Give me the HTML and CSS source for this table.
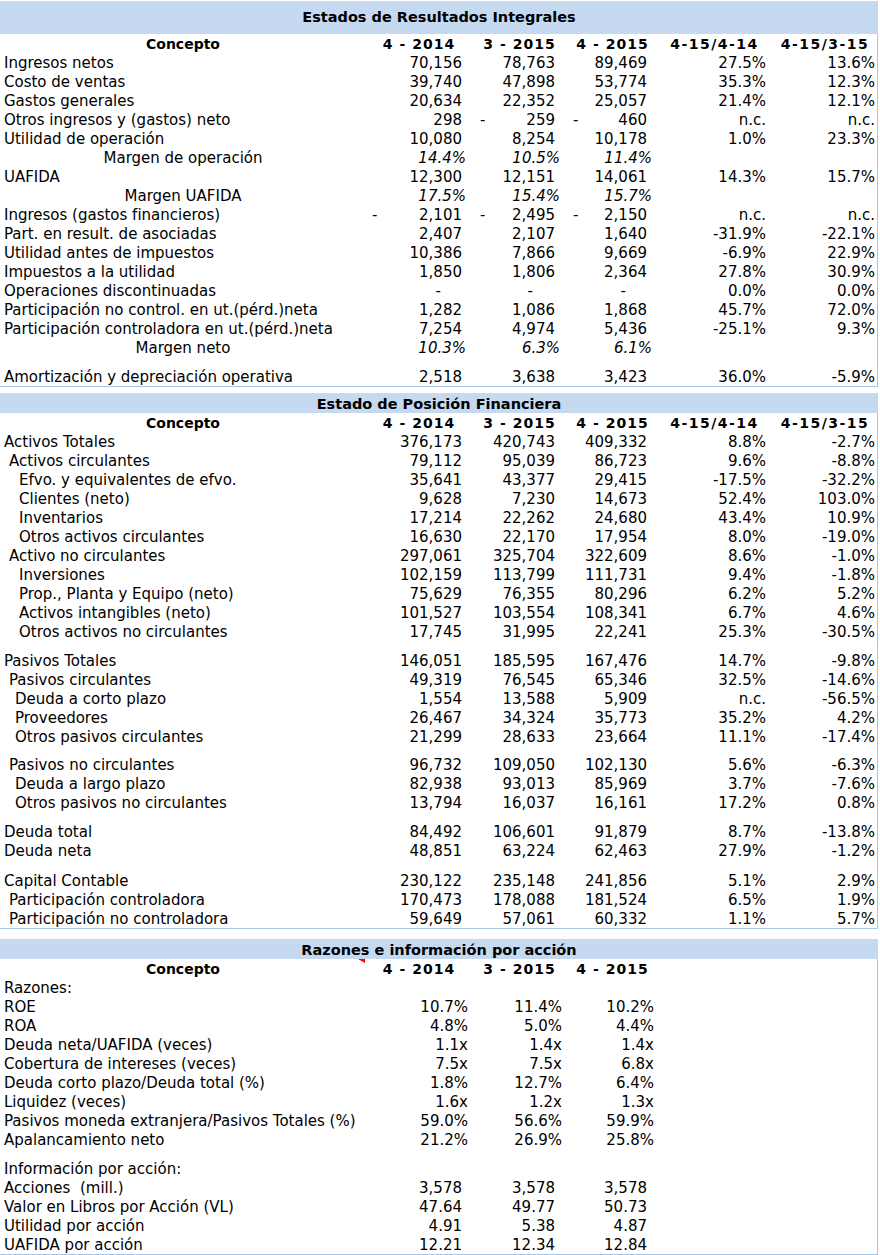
FILE: index.html
```html
<!DOCTYPE html>
<html lang="es">
<head>
<meta charset="utf-8">
<title>Estados financieros</title>
<link rel="stylesheet" href="styles.css">
</head>
<body>
<div class="sheet">

<section class="block b1">
  <div class="title">Estados de Resultados Integrales</div>
  <div class="row head"><div class="c">Concepto</div><div class="yr">4 - 2014</div><div class="yr">3 - 2015</div><div class="yr">4 - 2015</div><div class="rt">4-15/4-14</div><div class="rt">4-15/3-15</div></div>
  <div class="row"><div class="c">Ingresos netos</div><div class="n">70,156</div><div class="n">78,763</div><div class="n">89,469</div><div class="p">27.5%</div><div class="p">13.6%</div></div>
  <div class="row"><div class="c">Costo de ventas</div><div class="n">39,740</div><div class="n">47,898</div><div class="n">53,774</div><div class="p">35.3%</div><div class="p">12.3%</div></div>
  <div class="row"><div class="c">Gastos generales</div><div class="n">20,634</div><div class="n">22,352</div><div class="n">25,057</div><div class="p">21.4%</div><div class="p">12.1%</div></div>
  <div class="row"><div class="c">Otros ingresos y (gastos) neto</div><div class="n">298</div><div class="neg"><span>-</span><span>259</span></div><div class="neg"><span>-</span><span>460</span></div><div class="p">n.c.</div><div class="p">n.c.</div></div>
  <div class="row"><div class="c">Utilidad de operación</div><div class="n">10,080</div><div class="n">8,254</div><div class="n">10,178</div><div class="p">1.0%</div><div class="p">23.3%</div></div>
  <div class="row"><div class="c ctr">Margen de operación</div><div class="m">14.4%</div><div class="m">10.5%</div><div class="m">11.4%</div><div></div><div></div></div>
  <div class="row"><div class="c">UAFIDA</div><div class="n">12,300</div><div class="n">12,151</div><div class="n">14,061</div><div class="p">14.3%</div><div class="p">15.7%</div></div>
  <div class="row"><div class="c ctr">Margen UAFIDA</div><div class="m">17.5%</div><div class="m">15.4%</div><div class="m">15.7%</div><div></div><div></div></div>
  <div class="row"><div class="c">Ingresos (gastos financieros)</div><div class="neg"><span>-</span><span>2,101</span></div><div class="neg"><span>-</span><span>2,495</span></div><div class="neg"><span>-</span><span>2,150</span></div><div class="p">n.c.</div><div class="p">n.c.</div></div>
  <div class="row"><div class="c">Part. en result. de asociadas</div><div class="n">2,407</div><div class="n">2,107</div><div class="n">1,640</div><div class="p">-31.9%</div><div class="p">-22.1%</div></div>
  <div class="row"><div class="c">Utilidad antes de impuestos</div><div class="n">10,386</div><div class="n">7,866</div><div class="n">9,669</div><div class="p">-6.9%</div><div class="p">22.9%</div></div>
  <div class="row"><div class="c">Impuestos a la utilidad</div><div class="n">1,850</div><div class="n">1,806</div><div class="n">2,364</div><div class="p">27.8%</div><div class="p">30.9%</div></div>
  <div class="row"><div class="c">Operaciones discontinuadas</div><div class="z">-</div><div class="z">-</div><div class="z">-</div><div class="p">0.0%</div><div class="p">0.0%</div></div>
  <div class="row"><div class="c">Participación no control. en ut.(pérd.)neta</div><div class="n">1,282</div><div class="n">1,086</div><div class="n">1,868</div><div class="p">45.7%</div><div class="p">72.0%</div></div>
  <div class="row"><div class="c">Participación controladora en ut.(pérd.)neta</div><div class="n">7,254</div><div class="n">4,974</div><div class="n">5,436</div><div class="p">-25.1%</div><div class="p">9.3%</div></div>
  <div class="row"><div class="c ctr">Margen neto</div><div class="m">10.3%</div><div class="m">6.3%</div><div class="m">6.1%</div><div></div><div></div></div>
  <div class="gap g10"></div>
  <div class="row"><div class="c">Amortización y depreciación operativa</div><div class="n">2,518</div><div class="n">3,638</div><div class="n">3,423</div><div class="p">36.0%</div><div class="p">-5.9%</div></div>
</section>

<section class="block b2">
  <div class="title">Estado de Posición Financiera</div>
  <div class="row head"><div class="c">Concepto</div><div class="yr">4 - 2014</div><div class="yr">3 - 2015</div><div class="yr">4 - 2015</div><div class="rt">4-15/4-14</div><div class="rt">4-15/3-15</div></div>
  <div class="row"><div class="c">Activos Totales</div><div class="n">376,173</div><div class="n">420,743</div><div class="n">409,332</div><div class="p">8.8%</div><div class="p">-2.7%</div></div>
  <div class="row"><div class="c i1">Activos circulantes</div><div class="n">79,112</div><div class="n">95,039</div><div class="n">86,723</div><div class="p">9.6%</div><div class="p">-8.8%</div></div>
  <div class="row"><div class="c i3">Efvo. y equivalentes de efvo.</div><div class="n">35,641</div><div class="n">43,377</div><div class="n">29,415</div><div class="p">-17.5%</div><div class="p">-32.2%</div></div>
  <div class="row"><div class="c i3">Clientes (neto)</div><div class="n">9,628</div><div class="n">7,230</div><div class="n">14,673</div><div class="p">52.4%</div><div class="p">103.0%</div></div>
  <div class="row"><div class="c i3">Inventarios</div><div class="n">17,214</div><div class="n">22,262</div><div class="n">24,680</div><div class="p">43.4%</div><div class="p">10.9%</div></div>
  <div class="row"><div class="c i3">Otros activos circulantes</div><div class="n">16,630</div><div class="n">22,170</div><div class="n">17,954</div><div class="p">8.0%</div><div class="p">-19.0%</div></div>
  <div class="row"><div class="c i1">Activo no circulantes</div><div class="n">297,061</div><div class="n">325,704</div><div class="n">322,609</div><div class="p">8.6%</div><div class="p">-1.0%</div></div>
  <div class="row"><div class="c i3">Inversiones</div><div class="n">102,159</div><div class="n">113,799</div><div class="n">111,731</div><div class="p">9.4%</div><div class="p">-1.8%</div></div>
  <div class="row"><div class="c i3">Prop., Planta y Equipo (neto)</div><div class="n">75,629</div><div class="n">76,355</div><div class="n">80,296</div><div class="p">6.2%</div><div class="p">5.2%</div></div>
  <div class="row"><div class="c i3">Activos intangibles (neto)</div><div class="n">101,527</div><div class="n">103,554</div><div class="n">108,341</div><div class="p">6.7%</div><div class="p">4.6%</div></div>
  <div class="row"><div class="c i3">Otros activos no circulantes</div><div class="n">17,745</div><div class="n">31,995</div><div class="n">22,241</div><div class="p">25.3%</div><div class="p">-30.5%</div></div>
  <div class="gap g10"></div>
  <div class="row"><div class="c">Pasivos Totales</div><div class="n">146,051</div><div class="n">185,595</div><div class="n">167,476</div><div class="p">14.7%</div><div class="p">-9.8%</div></div>
  <div class="row"><div class="c i1">Pasivos circulantes</div><div class="n">49,319</div><div class="n">76,545</div><div class="n">65,346</div><div class="p">32.5%</div><div class="p">-14.6%</div></div>
  <div class="row"><div class="c i2">Deuda a corto plazo</div><div class="n">1,554</div><div class="n">13,588</div><div class="n">5,909</div><div class="p">n.c.</div><div class="p">-56.5%</div></div>
  <div class="row"><div class="c i2">Proveedores</div><div class="n">26,467</div><div class="n">34,324</div><div class="n">35,773</div><div class="p">35.2%</div><div class="p">4.2%</div></div>
  <div class="row"><div class="c i2">Otros pasivos circulantes</div><div class="n">21,299</div><div class="n">28,633</div><div class="n">23,664</div><div class="p">11.1%</div><div class="p">-17.4%</div></div>
  <div class="gap g9"></div>
  <div class="row"><div class="c i1">Pasivos no circulantes</div><div class="n">96,732</div><div class="n">109,050</div><div class="n">102,130</div><div class="p">5.6%</div><div class="p">-6.3%</div></div>
  <div class="row"><div class="c i2">Deuda a largo plazo</div><div class="n">82,938</div><div class="n">93,013</div><div class="n">85,969</div><div class="p">3.7%</div><div class="p">-7.6%</div></div>
  <div class="row"><div class="c i2">Otros pasivos no circulantes</div><div class="n">13,794</div><div class="n">16,037</div><div class="n">16,161</div><div class="p">17.2%</div><div class="p">0.8%</div></div>
  <div class="gap g10"></div>
  <div class="row"><div class="c">Deuda total</div><div class="n">84,492</div><div class="n">106,601</div><div class="n">91,879</div><div class="p">8.7%</div><div class="p">-13.8%</div></div>
  <div class="row"><div class="c">Deuda neta</div><div class="n">48,851</div><div class="n">63,224</div><div class="n">62,463</div><div class="p">27.9%</div><div class="p">-1.2%</div></div>
  <div class="gap g11"></div>
  <div class="row"><div class="c">Capital Contable</div><div class="n">230,122</div><div class="n">235,148</div><div class="n">241,856</div><div class="p">5.1%</div><div class="p">2.9%</div></div>
  <div class="row"><div class="c i1">Participación controladora</div><div class="n">170,473</div><div class="n">178,088</div><div class="n">181,524</div><div class="p">6.5%</div><div class="p">1.9%</div></div>
  <div class="row"><div class="c i1">Participación no controladora</div><div class="n">59,649</div><div class="n">57,061</div><div class="n">60,332</div><div class="p">1.1%</div><div class="p">5.7%</div></div>
</section>

<section class="block b3">
  <div class="title">Razones e información por acción</div>
  <div class="row head"><div class="c">Concepto<span class="flag"></span></div><div class="yr">4 - 2014</div><div class="yr">3 - 2015</div><div class="yr">4 - 2015</div><div></div><div></div></div>
  <div class="row"><div class="c">Razones:</div><div></div><div></div><div></div><div></div><div></div></div>
  <div class="row"><div class="c">ROE</div><div class="p">10.7%</div><div class="p">11.4%</div><div class="p">10.2%</div><div></div><div></div></div>
  <div class="row"><div class="c">ROA</div><div class="p">4.8%</div><div class="p">5.0%</div><div class="p">4.4%</div><div></div><div></div></div>
  <div class="row"><div class="c">Deuda neta/UAFIDA (veces)</div><div class="p">1.1x</div><div class="p">1.4x</div><div class="p">1.4x</div><div></div><div></div></div>
  <div class="row"><div class="c">Cobertura de intereses (veces)</div><div class="p">7.5x</div><div class="p">7.5x</div><div class="p">6.8x</div><div></div><div></div></div>
  <div class="row"><div class="c">Deuda corto plazo/Deuda total (%)</div><div class="p">1.8%</div><div class="p">12.7%</div><div class="p">6.4%</div><div></div><div></div></div>
  <div class="row"><div class="c">Liquidez (veces)</div><div class="p">1.6x</div><div class="p">1.2x</div><div class="p">1.3x</div><div></div><div></div></div>
  <div class="row"><div class="c">Pasivos moneda extranjera/Pasivos Totales (%)</div><div class="p">59.0%</div><div class="p">56.6%</div><div class="p">59.9%</div><div></div><div></div></div>
  <div class="row"><div class="c">Apalancamiento neto</div><div class="p">21.2%</div><div class="p">26.9%</div><div class="p">25.8%</div><div></div><div></div></div>
  <div class="gap g10"></div>
  <div class="row"><div class="c">Información por acción:</div><div></div><div></div><div></div><div></div><div></div></div>
  <div class="row"><div class="c">Acciones&nbsp; (mill.)</div><div class="n">3,578</div><div class="n">3,578</div><div class="n">3,578</div><div></div><div></div></div>
  <div class="row"><div class="c">Valor en Libros por Acción (VL)</div><div class="n">47.64</div><div class="n">49.77</div><div class="n">50.73</div><div></div><div></div></div>
  <div class="row"><div class="c">Utilidad por acción</div><div class="n">4.91</div><div class="n">5.38</div><div class="n">4.87</div><div></div><div></div></div>
  <div class="row"><div class="c">UAFIDA por acción</div><div class="n">12.21</div><div class="n">12.34</div><div class="n">12.84</div><div></div><div></div></div>
</section>

</div>
</body>
</html>
```

FILE: styles.css
```css
html, body {
  margin: 0;
  padding: 0;
  background: #ffffff;
}

body {
  font-family: "DejaVu Sans", Verdana, sans-serif;
  font-size: 15px;
  color: #000000;
  width: 880px;
}

.sheet {
  width: 878px;
  padding-top: 1px;
}

.block {
  border-right: 1px solid #a9c4e6;
  border-bottom: 1px solid #a9c4e6;
}

.b2 { margin-top: 6px; }
.b3 { margin-top: 10px; }

.title {
  box-sizing: border-box;
  background: #c5d9f1;
  margin-right: -1px;
  font-weight: bold;
  font-size: 14.5px;
  text-align: center;
  height: 20px;
  padding-top: 2px;
  line-height: 18px;
  white-space: nowrap;
}

.b1 .title {
  height: 33px;
  padding-top: 0;
  line-height: 32px;
}

.row {
  box-sizing: border-box;
  display: grid;
  grid-template-columns: 366px 104px 94px 92px 112px 109px;
  height: 19px;
  padding-top: 1px;
  line-height: 19px;
  white-space: nowrap;
}

.gap { height: 10px; }
.gap.g9 { height: 9px; }
.gap.g11 { height: 11px; }

.c { padding-left: 4px; }
.c.i1 { padding-left: 9px; }
.c.i2 { padding-left: 15px; }
.c.i3 { padding-left: 19px; }
.c.ctr { padding-left: 0; text-align: center; }

.n { text-align: right; padding-right: 9px; }
.row > .n:nth-child(2) { padding-right: 8px; }

.p { text-align: right; padding-right: 2px; }

.m { text-align: right; padding-right: 4px; font-style: italic; }

.z { text-align: right; padding-right: 30px; }
.row > .z:nth-child(2) { padding-right: 29px; }
.row > .z:nth-child(3) { padding-right: 31px; }

.neg {
  display: flex;
  justify-content: space-between;
  padding-right: 9px;
}
.row > .neg:nth-child(2) { padding-left: 6px; padding-right: 8px; }
.row > .neg:nth-child(3) { padding-left: 10px; }
.row > .neg:nth-child(4) { padding-left: 9px; }

.head > div {
  font-weight: bold;
  font-size: 14px;
  text-align: center;
}
.head > .c {
  position: relative;
  padding-left: 0;
}
.head > .yr { letter-spacing: 1px; padding-left: 5px; }
.head > .yr:nth-child(2) { padding-left: 2px; }
.head > .rt { letter-spacing: 1.5px; padding-left: 5px; }

.flag {
  position: absolute;
  top: -1px;
  right: 1px;
  width: 0;
  height: 0;
  border-top: 4px solid #ff0000;
  border-left: 7px solid transparent;
}
```
